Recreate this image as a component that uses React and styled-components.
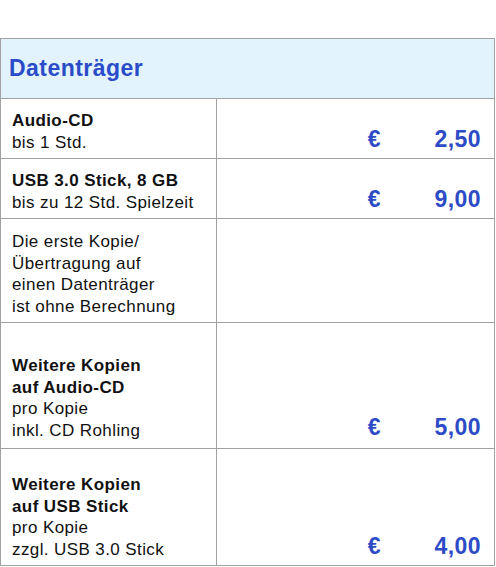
import React from 'react';
import styled, { createGlobalStyle } from 'styled-components';

const GlobalStyle = createGlobalStyle`
  html, body {
    margin: 0;
    padding: 0;
    background: #ffffff;
  }
  body {
    font-family: "Liberation Sans", Arial, sans-serif;
  }
`;

const Page = styled.div`
  width: 496px;
  height: 567px;
  padding-top: 38px;
  box-sizing: border-box;
  overflow: hidden;
`;

const Table = styled.div`
  width: 495px;
  border-left: 1px solid #a2a2a2;
  border-top: 1px solid #a2a2a2;
  box-sizing: border-box;
`;

const Header = styled.div`
  display: flex;
  align-items: center;
  height: 60px;
  padding-left: 8px;
  background: #e2f3fd;
  border-right: 1px solid #a2a2a2;
  border-bottom: 1px solid #a2a2a2;
  box-sizing: border-box;
`;

const Title = styled.h1`
  margin: 0;
  font-size: 23px;
  font-weight: 700;
  letter-spacing: 0.45px;
  line-height: 1;
  color: #2b4cc8;
`;

const Row = styled.div`
  display: grid;
  grid-template-columns: 216px 278px;
  height: ${(p) => p.$height}px;
`;

const Cell = styled.div`
  display: flex;
  box-sizing: border-box;
  border-right: 1px solid #a2a2a2;
  border-bottom: 1px solid #a2a2a2;
  padding-bottom: ${(p) => p.$pad}px;
`;

const LabelCell = styled(Cell)`
  flex-direction: column;
  justify-content: flex-end;
  padding-left: 11px;
  padding-right: 6px;
`;

const Line = styled.span`
  font-size: 17px;
  line-height: 21.4px;
  letter-spacing: 0.4px;
  color: #111111;
  font-weight: ${(p) => (p.$bold ? 700 : 400)};
  white-space: nowrap;
`;

const PriceCell = styled(Cell)`
  align-items: flex-end;
  justify-content: flex-end;
  padding-right: 13px;
`;

const Price = styled.div`
  display: flex;
  font-size: 23px;
  font-weight: 700;
  line-height: 27px;
  letter-spacing: 0.45px;
  color: #2d4bc6;
`;

const Amount = styled.span`
  width: 100px;
  text-align: right;
`;

const rows = [
  { height: 60, pad: 5, bold: ['Audio-CD'], lines: ['bis 1 Std.'], price: '2,50' },
  { height: 60, pad: 5, bold: ['USB 3.0 Stick, 8 GB'], lines: ['bis zu 12 Std. Spielzeit'], price: '9,00' },
  {
    height: 104,
    pad: 5,
    bold: [],
    lines: ['Die erste Kopie/', 'Übertragung auf', 'einen Datenträger', 'ist ohne Berechnung'],
  },
  {
    height: 126,
    pad: 7,
    bold: ['Weitere Kopien', 'auf Audio-CD'],
    lines: ['pro Kopie', 'inkl. CD Rohling'],
    price: '5,00',
  },
  {
    height: 117,
    pad: 5,
    bold: ['Weitere Kopien', 'auf USB Stick'],
    lines: ['pro Kopie', 'zzgl. USB 3.0 Stick'],
    price: '4,00',
  },
];

export default function App() {
  return (
    <>
      <GlobalStyle />
      <Page>
        <Table>
          <Header>
            <Title>Datenträger</Title>
          </Header>
          {rows.map((row, i) => (
            <Row key={i} $height={row.height}>
              <LabelCell $pad={row.pad}>
                {row.bold.map((t) => (
                  <Line key={t} $bold>
                    {t}
                  </Line>
                ))}
                {row.lines.map((t) => (
                  <Line key={t}>{t}</Line>
                ))}
              </LabelCell>
              <PriceCell $pad={row.pad}>
                {row.price && (
                  <Price>
                    <span>€</span>
                    <Amount>{row.price}</Amount>
                  </Price>
                )}
              </PriceCell>
            </Row>
          ))}
        </Table>
      </Page>
    </>
  );
}
